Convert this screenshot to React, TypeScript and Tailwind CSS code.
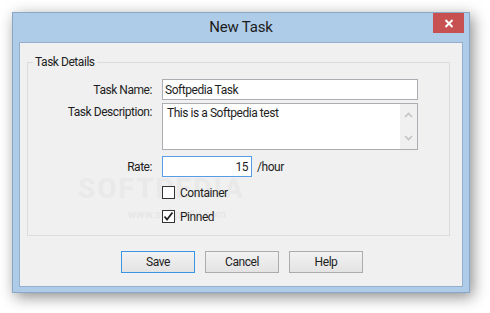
import React from "react";

const font = { fontFamily: 'Roboto, "Noto Sans", sans-serif' };

function Chevron({ up }: { up?: boolean }) {
  return (
    <svg width="9" height="6" viewBox="0 0 9 6" className="block">
      <path
        d={up ? "M1 5 L4.5 1.5 L8 5" : "M1 1 L4.5 4.5 L8 1"}
        fill="none"
        stroke="#c4c4c4"
        strokeWidth="1.6"
      />
    </svg>
  );
}

function Checkbox({ checked, label }: { checked?: boolean; label: string }) {
  return (
    <div className="flex items-center h-[13px]">
      <div className="w-[13px] h-[13px] border border-[#333333] bg-white flex items-center justify-center">
        {checked && (
          <svg width="11" height="11" viewBox="0 0 11 11">
            <path d="M1.5 5.5 L4 8.5 L9.5 1.5" fill="none" stroke="#222" strokeWidth="1.8" />
          </svg>
        )}
      </div>
      <span className="ml-[5px] text-[12px] tracking-[-0.45px] text-[#1e1e1e] leading-[16px]">{label}</span>
    </div>
  );
}

function Btn({ label, primary }: { label: string; primary?: boolean }) {
  return (
    <div
      className={`w-[74px] h-[22px] flex items-center justify-center text-[12px] tracking-[-0.45px] text-[#1e1e1e] bg-gradient-to-b from-[#f2f2f2] to-[#e3e3e3] border ${
        primary ? "border-[#3c94e6]" : "border-[#acacac]"
      }`}
    >
      {label}
    </div>
  );
}

export default function App() {
  return (
    <div className="w-[490px] h-[313px] bg-white pt-[12px] pl-[12px] overflow-hidden" style={font}>
      <div className="relative w-[458px] h-[281px] bg-[#aecbe8] border border-[#8ba7c7] shadow-[3px_4px_14px_rgba(0,0,0,0.45)] flex flex-col">
        <div className="h-[29px] flex items-center justify-center text-[15px] tracking-[-0.2px] text-[#1b1b1b]">
          New Task
        </div>
        <div className="absolute right-[5px] top-0 w-[31px] h-[20px] bg-[#c75050] flex items-center justify-center">
          <svg width="10" height="9" viewBox="0 0 10 9">
            <path d="M1.5 1 L8.5 8 M8.5 1 L1.5 8" stroke="white" strokeWidth="2" />
          </svg>
        </div>
        <div className="mx-[6px] h-[245px] bg-[#f0f0f0] border border-[#94aecd] flex flex-col">
          <div className="relative ml-[7px] mr-[12px] mt-[19px] h-[174px] border border-[#dcdcdc]">
            <div className="absolute left-[5px] top-[-9px] bg-[#f0f0f0] px-[2px] text-[12px] tracking-[-0.45px] leading-[16px] text-[#1e1e1e]">
              Task Details
            </div>
            <div className="absolute left-[50px] top-[112px] text-[28px] font-bold tracking-[2px] text-[#e9e9e9] leading-none select-none">
              SOFTPEDIA
            </div>
            <div className="absolute left-[100px] top-[146px] text-[11px] text-[#e4e4e4] leading-none select-none">
              www.softpedia.com
            </div>
            <div className="relative flex flex-col pt-[16px] text-[12px] tracking-[-0.45px] text-[#1e1e1e]">
              <div className="flex items-center">
                <div className="w-[124px] text-right leading-[16px]">Task Name:</div>
                <div className="ml-[10px] w-[256px] h-[21px] bg-white border border-[#abadb3] flex items-center px-[2px] leading-[16px]">
                  Softpedia Task
                </div>
              </div>
              <div className="flex items-start mt-[3px]">
                <div className="w-[124px] text-right leading-[16px] mt-[1px]">Task Description:</div>
                <div className="ml-[10px] w-[256px] h-[47px] bg-white border border-[#abadb3] flex">
                  <div className="flex-1 pl-[4px] pt-[1px] leading-[16px]">This is a Softpedia test</div>
                  <div className="w-[17px] bg-[#f0f0f0] flex flex-col items-center justify-between py-[8px]">
                    <Chevron up />
                    <Chevron />
                  </div>
                </div>
              </div>
              <div className="flex items-center mt-[6px]">
                <div className="w-[124px] text-right leading-[16px]">Rate:</div>
                <div className="ml-[10px] w-[90px] h-[21px] bg-white border border-[#569de5] flex items-center justify-end px-[3px] leading-[16px]">
                  15
                </div>
                <div className="ml-[5px] leading-[16px]">/hour</div>
              </div>
              <div className="ml-[134px] mt-[9px]">
                <Checkbox label="Container" />
              </div>
              <div className="ml-[134px] mt-[11px]">
                <Checkbox checked label="Pinned" />
              </div>
            </div>
          </div>
          <div className="flex gap-[10px] pl-[101px] mt-[15px]">
            <Btn label="Save" primary />
            <Btn label="Cancel" />
            <Btn label="Help" />
          </div>
        </div>
      </div>
    </div>
  );
}
